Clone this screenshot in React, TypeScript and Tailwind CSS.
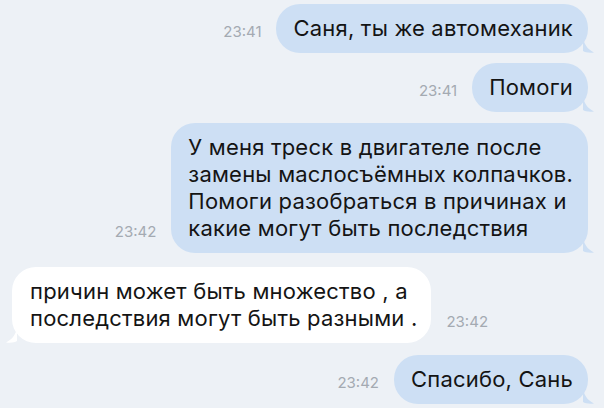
import type { ReactNode } from 'react';

type Msg = {
  id: number;
  out: boolean;
  time: string;
  lines: string[];
};

const messages: Msg[] = [
  { id: 1, out: true, time: '23:41', lines: ['Саня, ты же автомеханик'] },
  { id: 2, out: true, time: '23:41', lines: ['Помоги'] },
  {
    id: 3,
    out: true,
    time: '23:42',
    lines: [
      'У меня треск в двигателе после',
      'замены маслосъёмных колпачков.',
      'Помоги разобраться в причинах и',
      'какие могут быть последствия',
    ],
  },
  {
    id: 4,
    out: false,
    time: '23:42',
    lines: ['причин может быть множество , а', 'последствия могут быть разными .'],
  },
  { id: 5, out: true, time: '23:42', lines: ['Спасибо, Сань'] },
];

function Tail({ out }: { out: boolean }) {
  // little hook at the lower corner of the bubble
  return (
    <svg
      width="12"
      height="16"
      viewBox="0 0 12 16"
      className={out ? 'absolute -right-[7px] bottom-0' : 'absolute -left-[7px] bottom-0 -scale-x-100'}
    >
      <path
        d="M0 0 C1 7 4 12 11 15.5 C6 16 2 15.5 0 14 Z"
        className={out ? 'fill-[#cddff4]' : 'fill-white'}
      />
    </svg>
  );
}

function Time({ children }: { children: ReactNode }) {
  return (
    <span className="mb-[14px] text-[15px] leading-[15px] text-[#a4aab2] shrink-0">{children}</span>
  );
}

function Bubble({ msg }: { msg: Msg }) {
  return (
    <div
      className={`relative rounded-[24px] py-[11px] text-[22px] leading-[27px] tracking-[0.2px] text-[#141414] ${
        msg.out ? 'bg-[#cddff4] pl-[17px] pr-[15px]' : 'bg-white pl-[18px] pr-[14px]'
      }`}
    >
      {msg.lines.map((line, i) => (
        <div key={i} className="whitespace-nowrap">
          {line}
        </div>
      ))}
      <Tail out={msg.out} />
    </div>
  );
}

const gaps = ['', 'mt-[10px]', 'mt-[11px]', 'mt-[14px]', 'mt-[12px]'];

export default function App() {
  return (
    <div
      className="w-[604px] h-[408px] overflow-hidden bg-[#edf1f6] pt-[4px] pr-[16px] pl-[12px] flex flex-col"
      style={{ fontFamily: 'Inter, "Noto Sans", sans-serif' }}
    >
      {messages.map((m, i) => (
        <div
          key={m.id}
          className={`flex items-end gap-[15px] ${m.out ? 'justify-end' : 'justify-start'} ${gaps[i]}`}
        >
          {m.out && <Time>{m.time}</Time>}
          <Bubble msg={m} />
          {!m.out && <Time>{m.time}</Time>}
        </div>
      ))}
    </div>
  );
}
